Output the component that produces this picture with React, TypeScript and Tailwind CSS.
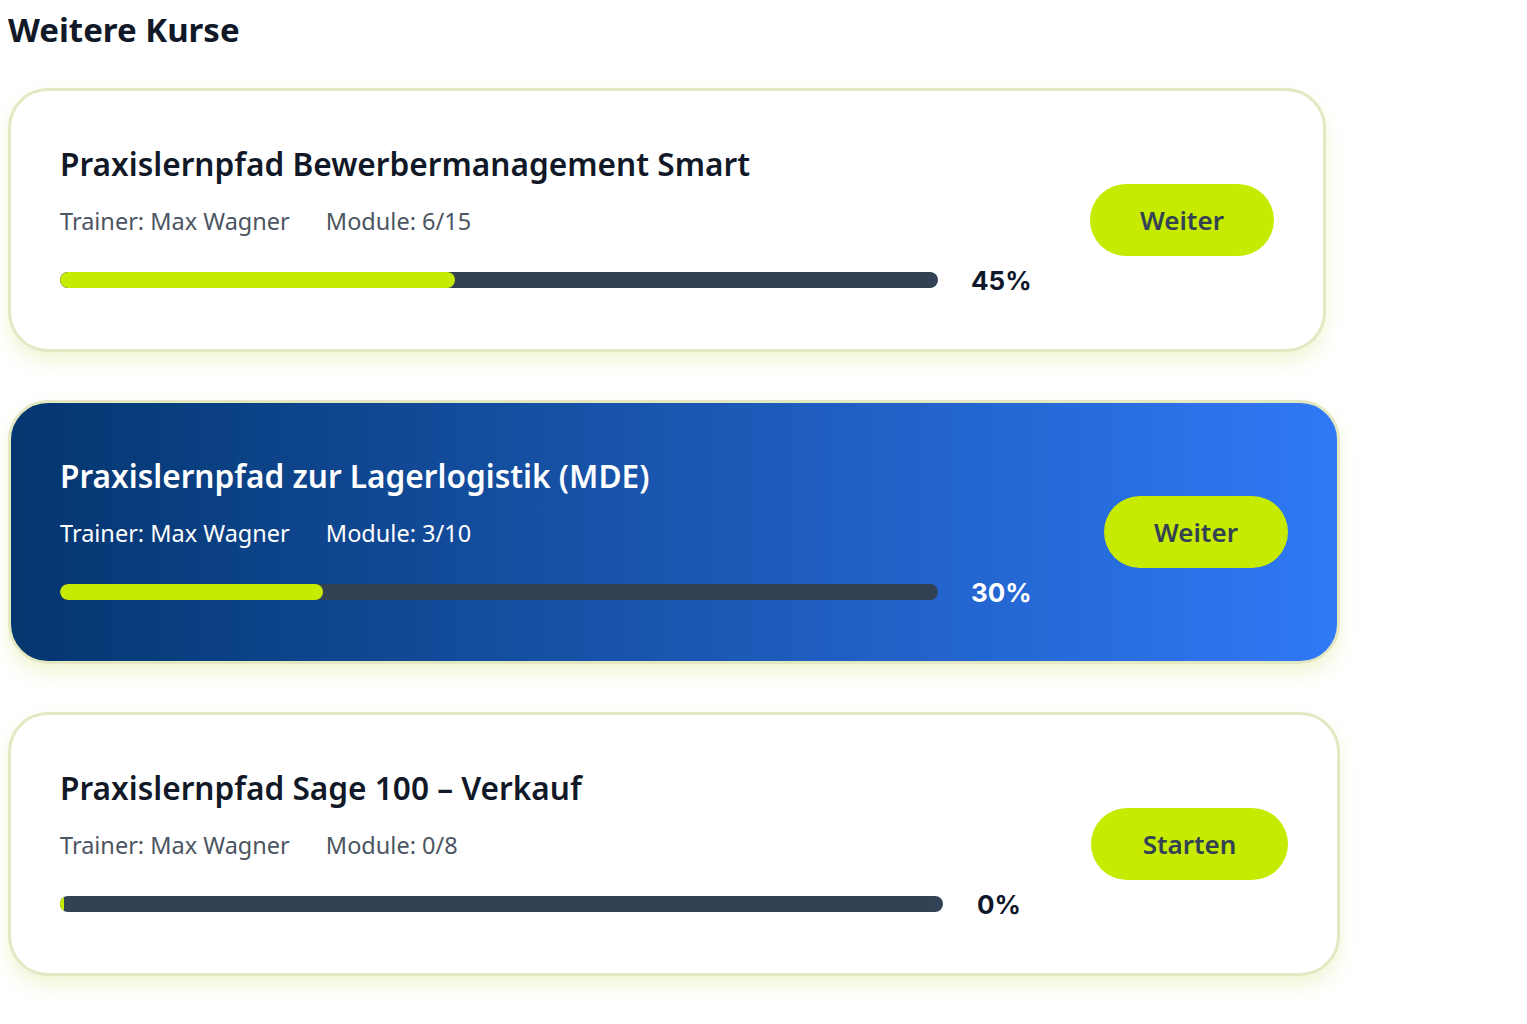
import React from 'react';

type Course = {
  title: string;
  trainer: string;
  modules: string;
  progress: number;
  action: string;
  highlighted?: boolean;
  cardWidth: string;
  barWidth: string;
  percentGap: string;
  buttonWidth: string;
};

const courses: Course[] = [
  {
    title: 'Praxislernpfad Bewerbermanagement Smart',
    trainer: 'Max Wagner',
    modules: '6/15',
    progress: 45,
    action: 'Weiter',
    cardWidth: 'w-[1318px]',
    barWidth: 'w-[878px]',
    percentGap: 'ml-[33px]',
    buttonWidth: 'w-[184px]',
  },
  {
    title: 'Praxislernpfad zur Lagerlogistik (MDE)',
    trainer: 'Max Wagner',
    modules: '3/10',
    progress: 30,
    action: 'Weiter',
    highlighted: true,
    cardWidth: 'w-[1332px]',
    barWidth: 'w-[878px]',
    percentGap: 'ml-[33px]',
    buttonWidth: 'w-[184px]',
  },
  {
    title: 'Praxislernpfad Sage 100 – Verkauf',
    trainer: 'Max Wagner',
    modules: '0/8',
    progress: 0,
    action: 'Starten',
    cardWidth: 'w-[1332px]',
    barWidth: 'w-[883px]',
    percentGap: 'ml-[34px]',
    buttonWidth: 'w-[197px]',
  },
];

function CourseCard({ course }: { course: Course }) {
  const hi = course.highlighted;
  return (
    <article
      className={`${course.cardWidth} flex h-[264px] items-center justify-between rounded-[40px] border-[3px] border-[#e3e8c2] px-[49px] shadow-[0_10px_18px_rgba(214,230,140,0.35)] ${
        hi ? 'bg-gradient-to-r from-[#04366f] to-[#3079f7]' : 'bg-white'
      }`}
    >
      <div>
        <h3 className={`text-[31.6px] font-semibold leading-[40px] ${hi ? 'text-white' : 'text-[#111827]'}`}>
          {course.title}
        </h3>
        <div className={`mt-[22px] flex gap-[36px] text-[23.5px] leading-[30px] ${hi ? 'text-white' : 'text-[#4b5563]'}`}>
          <span>Trainer: {course.trainer}</span>
          <span>Module: {course.modules}</span>
        </div>
        <div className="mt-[28px] flex h-[32px] items-center">
          <div className={`${course.barWidth} h-[16px] overflow-hidden rounded-full bg-[#334155]`}>
            <div
              className="h-full min-w-[4px] rounded-full bg-[#c6ea00]"
              style={{ width: `${course.progress}%` }}
            />
          </div>
          <span
            className={`${course.percentGap} font-['Inter',sans-serif] text-[26px] font-bold ${hi ? 'text-white' : 'text-[#0f172a]'}`}
          >
            {course.progress}%
          </span>
        </div>
      </div>
      <button
        type="button"
        className={`${course.buttonWidth} h-[72px] rounded-full bg-[#c6ea00] text-[26px] font-semibold text-[#334155]`}
      >
        {course.action}
      </button>
    </article>
  );
}

export default function App() {
  return (
    <div className="min-h-screen bg-white px-[8px] font-['Noto_Sans',sans-serif]">
      <h2 className="pt-[8px] text-[33px] font-bold leading-[44px] text-[#111827]">Weitere Kurse</h2>
      <div className="mt-[36px] flex flex-col gap-[48px]">
        {courses.map((course) => (
          <CourseCard key={course.title} course={course} />
        ))}
      </div>
    </div>
  );
}
